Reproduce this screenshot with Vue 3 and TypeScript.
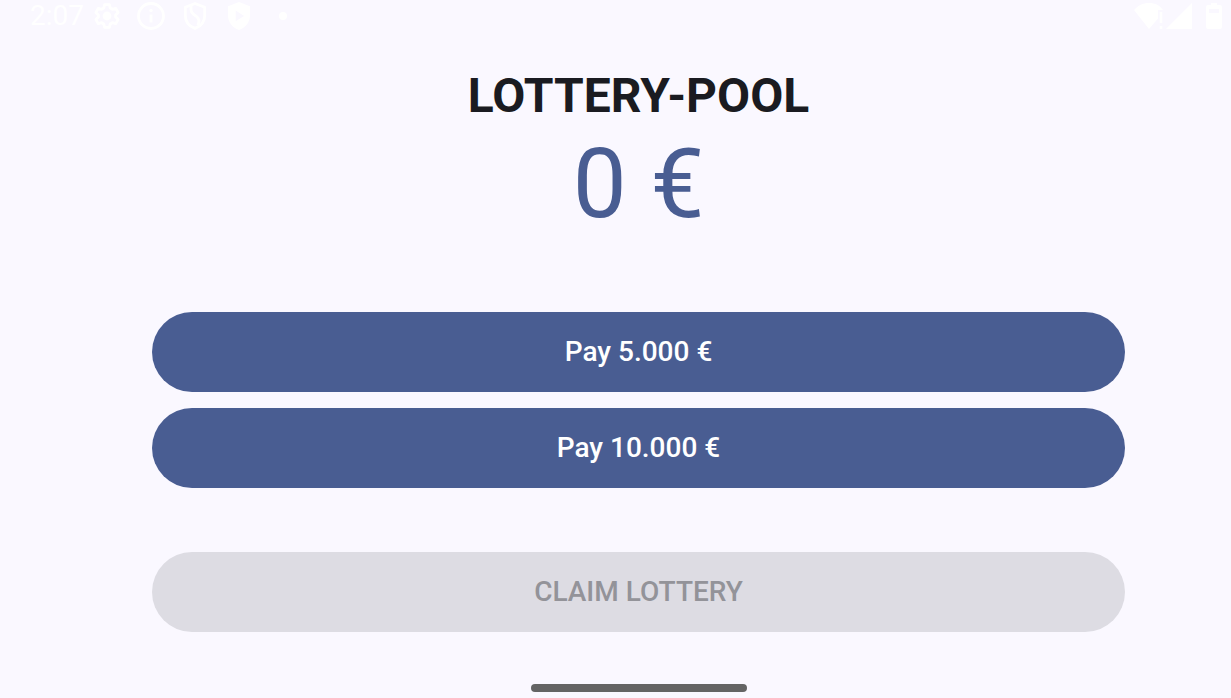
<script setup lang="ts">
import { computed, ref } from 'vue'

const pool = ref<number>(0)
const payments: number[] = [5000, 10000]

function formatEuro(amount: number): string {
  return `${String(amount).replace(/\B(?=(\d{3})+$)/g, '.')} €`
}

const poolLabel = computed<string>(() => formatEuro(pool.value))

function pay(amount: number): void {
  pool.value += amount
}

function claim(): void {
  pool.value = 0
}
</script>

<template>
  <div class="screen">
    <header class="status-bar">
      <div class="status-left">
        <span class="clock">2:07</span>
        <svg class="icon" viewBox="0 0 28 28" aria-hidden="true">
          <path
            d="M11.6 2.700h4.800l.8 3.300 2.200 1.300 3.300-1 2.400 4.100-2.500 2.500v2.200l2.500 2.500-2.400 4.100-3.300-1-2.200 1.300-.8 3.300h-4.800l-.8-3.300-2.200-1.300-3.300 1-2.400-4.100 2.500-2.500v-2.200l-2.500-2.500 2.400-4.100 3.300 1 2.200-1.300z"
            fill="none" stroke="currentColor" stroke-width="2.8" stroke-linejoin="round"
          />
          <circle cx="14" cy="14" r="4.4" fill="currentColor" />
        </svg>
        <svg class="icon" viewBox="0 0 28 28" aria-hidden="true">
          <circle cx="14" cy="14" r="12.500" fill="none" stroke="currentColor" stroke-width="2.800" />
          <circle cx="14" cy="8.500" r="1.700" fill="currentColor" />
          <path d="M14 12.500v8" stroke="currentColor" stroke-width="2.800" />
        </svg>
        <svg class="icon" viewBox="0 0 28 28" aria-hidden="true">
          <path
            d="M14 1.500l9.700 3.700v8.200c0 6-4 10.800-9.700 13-5.700-2.200-9.700-7-9.700-13V5.200z"
            fill="none" stroke="currentColor" stroke-width="2.800" stroke-linejoin="round"
          />
          <path
            d="M10 3.500v4c0 3 1.800 4.500 4.500 6.200 3.600 2.400 4.500 5.800 2.300 10"
            fill="none" stroke="currentColor" stroke-width="2.800"
          />
        </svg>
        <svg class="icon" viewBox="0 0 28 28" aria-hidden="true">
          <path
            d="M14 0l11 4.200v9.200c0 6.700-4.600 12.200-11 14.500C7.600 25.600 3 20.100 3 13.400V4.200zM10.700 8.500v10.800l8.400-5.400z"
            fill="currentColor" fill-rule="evenodd"
          />
        </svg>
        <svg class="icon" viewBox="0 0 28 28" aria-hidden="true">
          <circle cx="14" cy="14" r="4" fill="currentColor" />
        </svg>
      </div>
      <div class="status-right">
        <svg class="icon-wifi" viewBox="0 0 30 28" aria-hidden="true">
          <path d="M0 8C4 3.500 9 1 15 1s11 2.500 14 7h-5v8.500L15 27z" fill="currentColor" />
          <path d="M27 10v11M27 24v3" stroke="currentColor" stroke-width="2.600" />
        </svg>
        <svg class="icon-signal" viewBox="0 0 26 28" aria-hidden="true">
          <path d="M0 27L26 1v26z" fill="currentColor" />
        </svg>
        <svg class="icon-battery" viewBox="0 0 16 28" aria-hidden="true">
          <path
            d="M5 1h6v2h3q2 0 2 2v20q0 2-2 2H2q-2 0-2-2V5q0-2 2-2h3zM3 7v4h10V7z"
            fill="currentColor" fill-rule="evenodd"
          />
        </svg>
      </div>
    </header>

    <main class="content">
      <h1 class="title">LOTTERY-POOL</h1>
      <output class="amount">{{ poolLabel }}</output>
      <div class="payments">
        <button
          v-for="amount in payments"
          :key="amount"
          class="button"
          type="button"
          @click="pay(amount)"
        >
          Pay {{ formatEuro(amount) }}
        </button>
      </div>
      <button class="button" type="button" :disabled="pool === 0" @click="claim">
        CLAIM LOTTERY
      </button>
    </main>

    <footer class="gesture-area">
      <div class="gesture-handle"></div>
    </footer>
  </div>
</template>

<style>
body {
  margin: 0;
  background: #faf8ff;
}
</style>

<style scoped>
.screen {
  box-sizing: border-box;
  min-height: 100vh;
  display: flex;
  flex-direction: column;
  background: #faf8ff;
  color: #1a1b21;
  font-family: Roboto, sans-serif;
}

.status-bar {
  display: flex;
  justify-content: space-between;
  height: 32px;
  padding: 0 9px 0 30px;
  color: #ffffff;
}

.status-left {
  display: flex;
  align-items: center;
  gap: 16px;
}

.clock {
  margin-right: -7px;
  font-size: 28px;
  line-height: 32px;
}

.icon {
  width: 28px;
  height: 28px;
}

.status-right {
  display: flex;
  align-items: center;
}

.icon-wifi {
  width: 30px;
  height: 28px;
}

.icon-signal {
  width: 26px;
  height: 28px;
  margin: 0 14px 0 2px;
}

.icon-battery {
  width: 16px;
  height: 28px;
}

.content {
  flex: 1;
  display: flex;
  flex-direction: column;
  padding: 32px 106px 0 152px;
}

.title {
  margin: 0;
  font-size: 48px;
  line-height: 64px;
  font-weight: 700;
  text-align: center;
}

.amount {
  font-size: 96px;
  line-height: 112px;
  color: #495d92;
  text-align: center;
}

.payments {
  display: flex;
  flex-direction: column;
  gap: 16px;
  margin: 72px 0 64px;
}

.button {
  height: 80px;
  padding: 0 48px;
  border: 0;
  border-radius: 40px;
  background: #495d92;
  color: #ffffff;
  font-family: inherit;
  font-size: 28px;
  line-height: 40px;
  font-weight: 500;
  cursor: pointer;
}

.button:disabled {
  background: #dddce3;
  color: #939399;
  cursor: default;
}

.gesture-area {
  display: flex;
  justify-content: center;
  padding: 0 106px 6px 152px;
}

.gesture-handle {
  width: 216px;
  height: 8px;
  border-radius: 4px;
  background: #646464;
}
</style>
